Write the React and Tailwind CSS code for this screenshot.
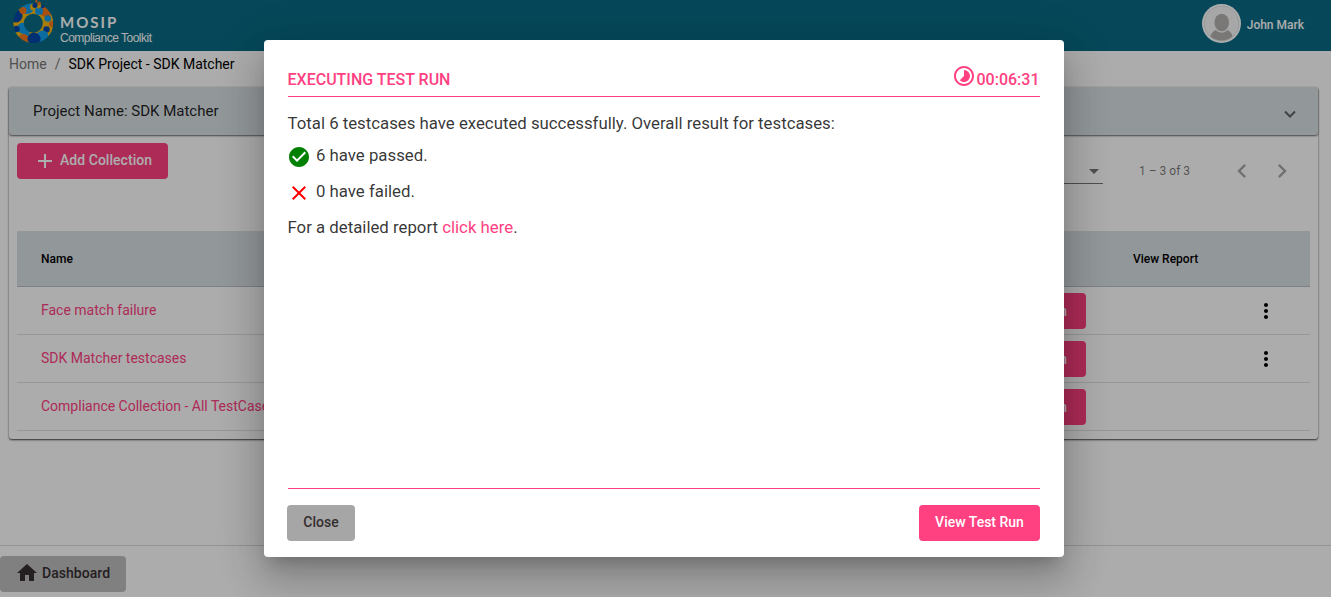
import { MdAdd, MdCheckCircle, MdClose, MdHome, MdTimelapse, MdMoreVert, MdChevronLeft, MdChevronRight, MdArrowDropDown } from "react-icons/md";

const rows = [
  { name: "Face match failure", menu: true },
  { name: "SDK Matcher testcases", menu: true },
  { name: "Compliance Collection - All TestCases", menu: false },
];

function Logo() {
  return (
    <svg className="h-[46px] w-[42px] shrink-0" viewBox="0 0 42 46">
      <defs>
        <mask id="ring" maskUnits="userSpaceOnUse" x="0" y="0" width="42" height="46">
          <circle cx="20.3" cy="23.2" r="14.7" fill="none" stroke="#fff" strokeWidth="10.4" />
        </mask>
      </defs>
      <g mask="url(#ring)">
        <rect width="42" height="46" fill="#f5b80c" />
        <circle cx="14" cy="7" r="7" fill="#12a0ee" />
        <circle cx="3" cy="16" r="6.5" fill="#0046a8" />
        <circle cx="10" cy="10.5" r="3.5" fill="#f5761a" />
        <circle cx="33" cy="11" r="6" fill="#f5761a" />
        <circle cx="20.5" cy="7" r="3.5" fill="#f5b80c" />
        <circle cx="26" cy="11" r="4" fill="#12a0ee" />
        <circle cx="34.8" cy="18.5" r="3.3" fill="#12a0ee" />
        <circle cx="39" cy="24" r="3" fill="#f5761a" />
        <circle cx="33.5" cy="29.5" r="3.2" fill="#0046a8" />
        <circle cx="10" cy="28" r="5.5" fill="#12a0ee" />
        <circle cx="13" cy="33" r="3.5" fill="#12a0ee" />
        <circle cx="3.5" cy="29" r="3.3" fill="#0046a8" />
        <circle cx="10.5" cy="39" r="5" fill="#f5761a" />
        <circle cx="29.5" cy="36.5" r="6" fill="#12a0ee" />
        <circle cx="21" cy="39" r="6.5" fill="#0046a8" />
      </g>
      <circle cx="22" cy="5.3" r="2.6" fill="#0046a8" />
      <circle cx="23.3" cy="1.2" r="1.2" fill="#f5761a" />
      <circle cx="26.3" cy="3.2" r="1.7" fill="#f5761a" />
      <circle cx="29.7" cy="6.5" r="1.8" fill="#0046a8" />
      <circle cx="25.5" cy="7.3" r="1.2" fill="#f5b80c" />
    </svg>
  );
}

function Avatar() {
  return (
    <svg className="h-[39px] w-[39px]" viewBox="0 0 39 39">
      <defs>
        <clipPath id="face"><circle cx="19.5" cy="19.5" r="17" /></clipPath>
      </defs>
      <circle cx="19.5" cy="19.5" r="19.5" fill="#fff" />
      <circle cx="19.5" cy="19.5" r="17.3" fill="#f7f7f7" stroke="#d0d8da" strokeWidth=".7" />
      <g clipPath="url(#face)" fill="#b3b1af">
        <ellipse cx="19.7" cy="18.5" rx="7.3" ry="8.8" />
        <path d="M7.500 38c0-6 2-10 6-12 4 3.400 8.500 3.400 12 0 4 2 6 6 6 12z" />
      </g>
    </svg>
  );
}

function Page() {
  return (
    <div className="flex h-[597px] w-full flex-col bg-[#fefefe]">
      <header className="flex h-[51px] shrink-0 items-start justify-between bg-[#0a6b84] pl-[13px] pr-[27px]">
        <div className="flex">
          <Logo />
          <div className="pl-[5px] pt-[14px] text-white">
            <div className="font-['Lato',sans-serif] text-[15px] font-bold leading-[17px] tracking-[2px]">MOSIP</div>
            <div className="font-['Liberation_Sans',sans-serif] text-[12px] leading-[14px] tracking-[-0.5px]">Compliance Toolkit</div>
          </div>
        </div>
        <div className="flex items-center gap-[6px] pt-1">
          <Avatar />
          <span className="pt-0.5 text-[12px] font-medium text-white">John Mark</span>
        </div>
      </header>

      <nav className="flex h-[36px] shrink-0 items-start gap-2 pl-[9px] pt-[3px] text-[14px] leading-[20px]">
        <span className="text-[#777]">Home</span>
        <span className="text-[#777]">/</span>
        <span className="text-black">SDK Project - SDK Matcher</span>
      </nav>

      <main className="ml-[9px] h-[352px] w-[1309px] shrink-0 rounded-[3px] shadow-[0_1px_2px_rgba(0,0,0,0.75)]">
        <div className="flex h-[48px] items-center justify-between rounded-[3px] bg-[#d8dfe3] pl-6 pr-[22px] shadow-[0_1px_2px_rgba(0,0,0,0.6)]">
          <span className="text-[15px] text-black/87">Project Name: SDK Matcher</span>
          <svg className="mt-[6px] h-3 w-3" viewBox="0 0 12 12" fill="none" stroke="#5f6264" strokeWidth="2"><path d="M1 3.500 6 8.500 11 3.500" /></svg>
        </div>
        <div className="flex h-[96px] items-start justify-between px-2 pt-2">
          <button className="flex h-9 w-[151px] items-center rounded bg-[#ff4081] pl-[16px] text-[14px] font-medium text-white">
            <MdAdd className="mr-[3px] size-6" />
            <span className="-mt-0.5 tracking-[0.04px]">Add Collection</span>
          </button>
          <div className="flex items-start pr-[14px] text-[12px] text-black/54">
            <div className="mt-[9px] flex h-[32px] w-[60px] items-center justify-end border-b border-black/54">
              <MdArrowDropDown className="-mr-[3px] mt-1.5 size-6" />
            </div>
            <span className="ml-9 mt-[19px] w-[90px] leading-[18px]">1 – 3 of 3</span>
            <MdChevronLeft className="-ml-px mt-[14px] size-7 text-black/35" />
            <MdChevronRight className="ml-3 mt-[14px] size-7 text-black/35" />
          </div>
        </div>
        <div className="mx-2">
          <div className="flex h-14 items-center border-b border-black/15 bg-[#d8dfe3] pl-6 text-[12px] font-medium text-black">
            <span className="w-[1092px]">Name</span>
            <span>View Report</span>
          </div>
          {rows.map((r) => (
            <div key={r.name} className="flex h-12 items-center border-b border-black/12 pl-6 text-[14px]">
              <span className="w-[975px] text-[#ff4081]">{r.name}</span>
              <span className="mt-px flex h-9 w-[70px] items-center justify-end rounded bg-[#ff4081] pr-[19px] font-medium text-white">Run</span>
              {r.menu && <MdMoreVert className="ml-[168px] mt-px size-6 text-black" />}
            </div>
          ))}
        </div>
      </main>

      <footer className="mt-auto h-[52px] border-t border-black/15 pt-[10px]">
        <button className="flex h-9 w-[126px] items-center rounded bg-[#bdbdbd] pl-[15px] text-[14px] text-[#352e30]">
          <MdHome className="-mt-0.5 mr-[3px] size-6 shrink-0" />
          <span className="-mt-0.5 font-medium tracking-[0.04px]">Dashboard</span>
        </button>
      </footer>
    </div>
  );
}

function RunDialog() {
  return (
    <div className="flex h-[517px] w-[800px] flex-col rounded bg-white px-6 pb-4 shadow-[0_11px_15px_-7px_rgba(0,0,0,0.2),0_24px_38px_3px_rgba(0,0,0,0.14),0_9px_46px_8px_rgba(0,0,0,0.12)]">
      <div className="flex h-[57px] items-start justify-between border-b border-[#ff4081] pt-6 text-[#ff4081]">
        <h1 className="-ml-[0.5px] pt-1 text-[16px] font-medium leading-[24px]">EXECUTING TEST RUN</h1>
        <div className="mr-[0.5px] flex items-start">
          <MdTimelapse className="-ml-px mr-px size-6" />
          <span className="pt-1 text-[16px] font-medium leading-[24px]">00:06:31</span>
        </div>
      </div>
      <div className="-ml-[0.5px] flex-1 pt-[14px] text-[16.8px] leading-[24px] text-black/80">
        <p>Total 6 testcases have executed successfully. Overall result for testcases:</p>
        <p className="mt-2 flex h-6"><MdCheckCircle className="-ml-[0.5px] mr-[5px] mt-0.5 size-6 text-[#008000]" />6 have passed.</p>
        <p className="mt-3 flex h-6"><MdClose className="-ml-[0.5px] mr-[5px] mt-0.5 size-6 text-[#ff0000]" />0 have failed.</p>
        <p className="mt-3">For a detailed report <a className="text-[#ff4081]">click here</a>.</p>
      </div>
      <div className="flex justify-between border-t border-[#ff4081] pt-4 text-[14px] font-medium">
        <button className="-ml-px h-9 w-[68px] rounded bg-[#a6a6a6] pb-0.5 text-[#352e30]">Close</button>
        <button className="h-9 w-[121px] rounded bg-[#ff4081] pb-0.5 text-white">View Test Run</button>
      </div>
    </div>
  );
}

export default function App() {
  return (
    <div className="relative h-[597px] w-full overflow-hidden font-['Roboto',sans-serif]">
      <Page />
      <div className="absolute inset-0 flex items-start bg-black/32 pl-[264px] pt-10">
        <RunDialog />
      </div>
    </div>
  );
}
